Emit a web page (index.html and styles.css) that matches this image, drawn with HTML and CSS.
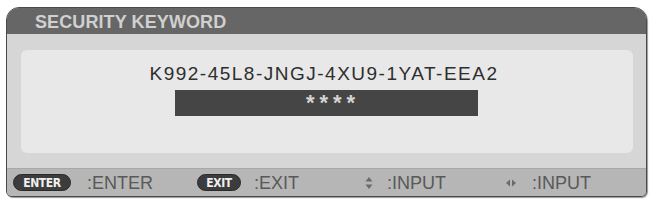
FILE: index.html
```html
<!DOCTYPE html>
<html>
<head>
<meta charset="utf-8">
<link rel="stylesheet" href="styles.css">
</head>
<body>
<div class="frame">
  <div class="title">SECURITY KEYWORD</div>
  <div class="body">
    <div class="panel">
      <div class="keyword">K992-45L8-JNGJ-4XU9-1YAT-EEA2</div>
      <div class="input-bar">****</div>
    </div>
  </div>
  <div class="footer">
    <div class="group"><span class="pill pill-enter">ENTER</span><span class="label">:ENTER</span></div>
    <div class="group"><span class="pill pill-exit">EXIT</span><span class="label">:EXIT</span></div>
    <div class="group">
      <svg class="icon-ud" width="8" height="12" viewBox="0 0 8 12"><path d="M4 0 L7.5 4.5 L0.5 4.5 Z M4 12 L7.5 7.5 L0.5 7.5 Z" fill="#6a6a6a"/></svg>
      <span class="label">:INPUT</span>
    </div>
    <div class="group">
      <svg class="icon-lr" width="10" height="8" viewBox="0 0 10 8"><path d="M0 4 L4 0.5 L4 7.5 Z M10 4 L6 0.5 L6 7.5 Z" fill="#6a6a6a"/></svg>
      <span class="label">:INPUT</span>
    </div>
  </div>
</div>
</body>
</html>
```
FILE: styles.css
```css
html, body {
  margin: 0;
  padding: 0;
  background: #ffffff;
}
body {
  font-family: "Liberation Sans", Arial, sans-serif;
  width: 651px;
  height: 200px;
  overflow: hidden;
}
.frame {
  margin: 7px 0 0 6px;
  width: 639px;
  height: 188px;
  border: 1px solid #4a4a4a;
  border-radius: 13px 13px 6px 6px;
  box-shadow: 1px 1px 1px #9a9a9a;
  overflow: hidden;
  display: flex;
  flex-direction: column;
  background: #d6d6d6;
}
.title {
  height: 26px;
  background: #666666;
  color: #d0d0d0;
  font-weight: bold;
  font-size: 18px;
  line-height: 28px;
  padding-left: 28px;
  letter-spacing: 0.1px;
}
.body {
  background: #d6d6d6;
  padding: 16px 13px 15px 14px;
}
.panel {
  height: 103px;
  background: #e8e8e8;
  border-radius: 6px;
  display: flex;
  flex-direction: column;
  align-items: center;
}
.keyword {
  margin-top: 13px;
  font-size: 19px;
  line-height: 22px;
  letter-spacing: 1.5px;
  color: #2e2e2e;
  margin-right: 6px;
}
.input-bar {
  margin-top: 5px;
  margin-right: 2px;
  width: 303px;
  height: 26px;
  background: #454545;
  color: #d4d4d4;
  font-size: 22px;
  font-weight: bold;
  line-height: 26px;
  text-align: center;
  letter-spacing: 5px;
  padding-left: 14px;
  box-sizing: border-box;
}
.footer {
  flex: 1;
  background: #b6b6b6;
  border-top: 1px solid #a8a8a8;
  display: grid;
  grid-template-columns: 184px 168px 141px 1fr;
  align-items: center;
  padding-left: 6px;
}
.group {
  display: flex;
  align-items: center;
}
.pill {
  display: inline-block;
  height: 17px;
  border-radius: 9px;
  background: #3c3c3c;
  color: #f0f0f0;
  font-family: "DejaVu Sans Condensed", "Liberation Sans Narrow", sans-serif;
  font-weight: bold;
  font-size: 12px;
  line-height: 16px;
  text-align: center;
  letter-spacing: -0.4px;
  border: 1px solid #2a2a2a;
  box-sizing: border-box;
}
.pill-enter {
  width: 58px;
  margin-right: 16px;
}
.pill-exit {
  width: 44px;
  margin-right: 13px;
}
.label {
  color: #595959;
  font-size: 18px;
  line-height: 20px;
}
.icon-ud {
  margin-right: 14px;
}
.icon-lr {
  margin-right: 16px;
}
```
